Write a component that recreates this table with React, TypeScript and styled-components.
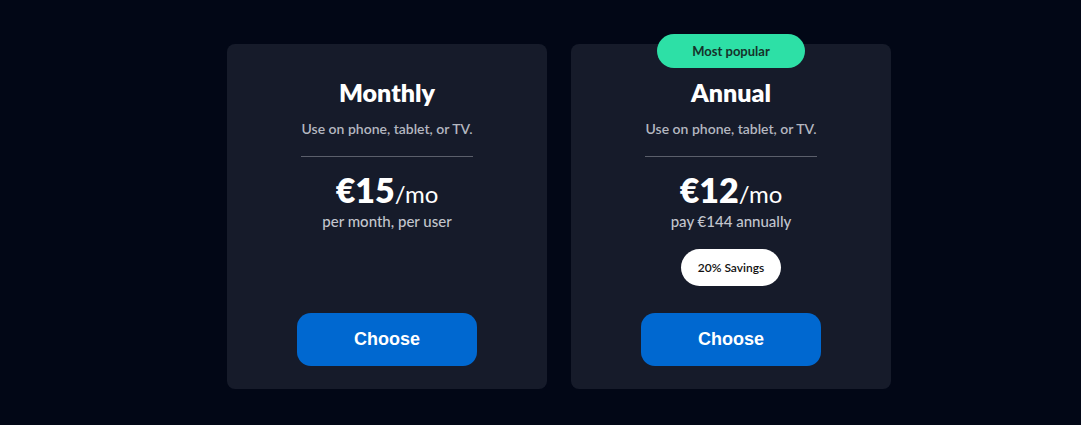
import React from "react";
import styled, { createGlobalStyle } from "styled-components";

const Global = createGlobalStyle`
  html, body { margin: 0; padding: 0; background: #020716; }
  body { font-family: "Lato", "Liberation Sans", sans-serif; }
  * { box-sizing: border-box; }
`;

const Page = styled.div`
  min-height: 425px;
  display: flex;
  gap: 24px;
  padding: 44px 0 0 227px;
  align-items: flex-start;
`;

const Card = styled.div`
  position: relative;
  width: 320px;
  height: 345px;
  background: #161b2a;
  border-radius: 8px;
  display: flex;
  flex-direction: column;
  align-items: center;
  padding: 32px 0 23px;
`;

const Badge = styled.div`
  position: absolute;
  top: -10px;
  left: 50%;
  transform: translateX(-50%);
  width: 148px;
  height: 34px;
  border-radius: 17px;
  background: #2de0a6;
  color: #15322a;
  font-size: 13px;
  font-weight: 700;
  display: flex;
  align-items: center;
  justify-content: center;
`;

const Title = styled.h2`
  margin: 0;
  font-size: 25px;
  line-height: 32px;
  font-weight: 800;
  color: #ffffff;
`;

const Subtitle = styled.p`
  margin: 11px 0 0;
  font-size: 14px;
  line-height: 20px;
  font-weight: 600;
  color: #b4b7c0;
`;

const Divider = styled.hr`
  margin: 17px 0 0;
  width: 172px;
  border: none;
  height: 1px;
  background: #5b5f6b;
`;

const Price = styled.div`
  margin-top: 13px;
  line-height: 40px;
  color: #ffffff;
  display: flex;
  align-items: baseline;
`;

const Amount = styled.span`
  font-size: 34px;
  font-weight: 800;
`;

const Unit = styled.span`
  font-size: 24px;
  font-weight: 400;
`;

const Note = styled.p`
  margin: -3px 0 0;
  font-size: 15px;
  line-height: 20px;
  font-weight: 500;
  color: #c2c5cd;
`;

const Pill = styled.div`
  margin-top: 18px;
  width: 100px;
  height: 37px;
  border-radius: 19px;
  background: #ffffff;
  color: #111111;
  font-size: 12px;
  font-weight: 600;
  display: flex;
  align-items: center;
  justify-content: center;
`;

const Button = styled.button`
  margin-top: auto;
  width: 180px;
  height: 53px;
  border: none;
  border-radius: 14px;
  background: #0068d0;
  color: #ffffff;
  font-family: "Liberation Sans", Arial, sans-serif;
  font-size: 18px;
  font-weight: 700;
  cursor: pointer;
`;

type Plan = {
  name: string;
  amount: string;
  note: string;
  popular?: boolean;
  savings?: string;
};

const plans: Plan[] = [
  { name: "Monthly", amount: "€15", note: "per month, per user" },
  { name: "Annual", amount: "€12", note: "pay €144 annually", popular: true, savings: "20% Savings" },
];

export default function App() {
  return (
    <>
      <Global />
      <Page>
        {plans.map((p) => (
          <Card key={p.name}>
            {p.popular && <Badge>Most popular</Badge>}
            <Title>{p.name}</Title>
            <Subtitle>Use on phone, tablet, or TV.</Subtitle>
            <Divider />
            <Price>
              <Amount>{p.amount}</Amount>
              <Unit>/mo</Unit>
            </Price>
            <Note>{p.note}</Note>
            {p.savings && <Pill>{p.savings}</Pill>}
            <Button>Choose</Button>
          </Card>
        ))}
      </Page>
    </>
  );
}
